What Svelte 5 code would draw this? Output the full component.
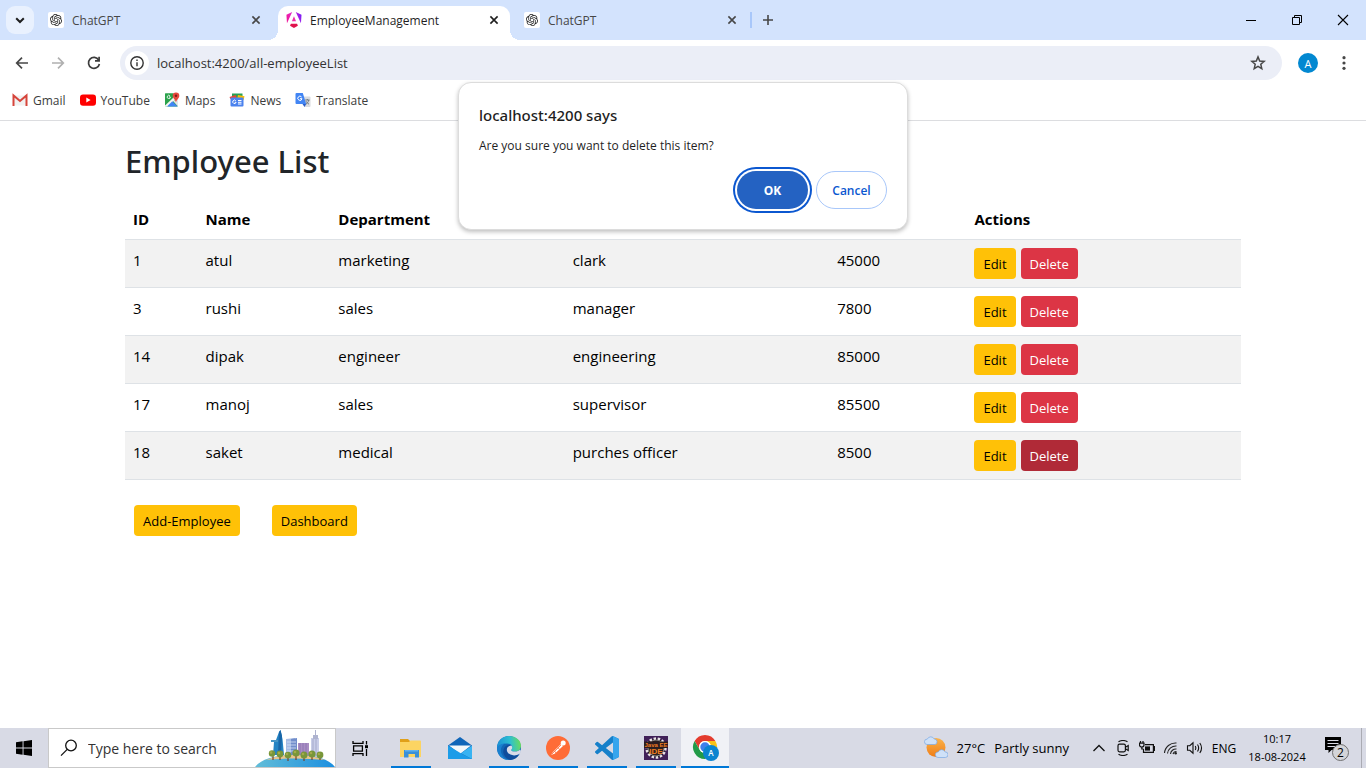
<script>
  let employees = $state([
    { id: 1, name: 'atul', department: 'marketing', role: 'clark', salary: 45000 },
    { id: 3, name: 'rushi', department: 'sales', role: 'manager', salary: 7800 },
    { id: 14, name: 'dipak', department: 'engineer', role: 'engineering', salary: 85000 },
    { id: 17, name: 'manoj', department: 'sales', role: 'supervisor', salary: 85500 },
    { id: 18, name: 'saket', department: 'medical', role: 'purches officer', salary: 8500 }
  ]);
  let pending = $state(18);
  let search = $state('');

  function confirmDelete() {
    employees = employees.filter((e) => e.id !== pending);
    pending = null;
  }
</script>

{#snippet closeIcon()}
  <svg width="16" height="16" viewBox="0 0 16 16" fill="none" stroke="currentColor" stroke-width="1.6"><path d="M4.400 4.400l7.200 7.200M11.600 4.400l-7.200 7.200" /></svg>
{/snippet}

{#snippet gptIcon()}
  <svg class="fav" width="16" height="16" viewBox="0 0 16 16">
    <rect width="16" height="16" rx="2" fill="#fff" />
    <g transform="translate(2 2) scale(.5)">
      <path fill="#222" d="M22.2819 9.8211a5.9847 5.9847 0 0 0-.5157-4.9108 6.0462 6.0462 0 0 0-6.5098-2.9A6.0651 6.0651 0 0 0 4.9807 4.1818a5.9847 5.9847 0 0 0-3.9977 2.9 6.0462 6.0462 0 0 0 .7427 7.0966 5.98 5.98 0 0 0 .511 4.9107 6.051 6.051 0 0 0 6.5146 2.9001A5.9847 5.9847 0 0 0 13.2599 24a6.0557 6.0557 0 0 0 5.7718-4.2058 5.9894 5.9894 0 0 0 3.9977-2.9001 6.0557 6.0557 0 0 0-.7475-7.0729zm-9.022 12.6081a4.4755 4.4755 0 0 1-2.8764-1.0408l.1419-.0804 4.7783-2.7582a.7948.7948 0 0 0 .3927-.6813v-6.7369l2.02 1.1686a.071.071 0 0 1 .038.052v5.5826a4.504 4.504 0 0 1-4.4945 4.4944zm-9.6607-4.1254a4.4708 4.4708 0 0 1-.5346-3.0137l.142.0852 4.783 2.7582a.7712.7712 0 0 0 .7806 0l5.8428-3.3685v2.3324a.0804.0804 0 0 1-.0332.0615L9.74 19.9502a4.4992 4.4992 0 0 1-6.1408-1.6464zM2.3408 7.8956a4.485 4.485 0 0 1 2.3655-1.9728V11.6a.7664.7664 0 0 0 .3879.6765l5.8144 3.3543-2.0201 1.1685a.0757.0757 0 0 1-.071 0l-4.8303-2.7865A4.504 4.504 0 0 1 2.3408 7.872zm16.5963 3.8558L13.1038 8.364 15.1192 7.2a.0757.0757 0 0 1 .071 0l4.8303 2.7913a4.4944 4.4944 0 0 1-.6765 8.1042v-5.6772a.79.79 0 0 0-.407-.667zm2.0107-3.0231l-.142-.0852-4.7735-2.7818a.7759.7759 0 0 0-.7854 0L9.409 9.2297V6.8974a.0662.0662 0 0 1 .0284-.0615l4.8303-2.7866a4.4992 4.4992 0 0 1 6.6802 4.66zM8.3065 12.863l-2.02-1.1638a.0804.0804 0 0 1-.038-.0567V6.0742a4.4992 4.4992 0 0 1 7.3757-3.4537l-.142.0805L8.704 5.459a.7948.7948 0 0 0-.3927.6813zm1.0976-2.3654l2.602-1.4998 2.6069 1.4998v2.9994l-2.5974 1.4997-2.6067-1.4997Z" />
    </g>
  </svg>
{/snippet}

<div class="screen">
  <header class="browser">
    <div class="tabstrip">
      <button class="tabsearch" aria-label="Search tabs">
        <svg width="16" height="16" viewBox="0 0 16 16" fill="none" stroke="#1f1f1f" stroke-width="2"><path d="M4.2 6.2L8 10l3.8-3.8" /></svg>
      </button>
      <div class="tab first">
        {@render gptIcon()}
        <span class="title">ChatGPT</span>
        <button class="close" aria-label="Close tab">{@render closeIcon()}</button>
      </div>
      <div class="tab active">
        <svg class="fav" width="16" height="16" viewBox="0 0 223 236">
          <defs><linearGradient id="ng" x1="0" y1="0.6" x2="1" y2="0.4"><stop offset="0" stop-color="#f0169a" /><stop offset="0.5" stop-color="#e32bd0" /><stop offset="1" stop-color="#7a1cf5" /></linearGradient></defs>
          <path fill="url(#ng)" d="m222.077 39.192-8.019 125.923L137.387 0l84.69 39.192ZM7.937 165.115 0 39.192 84.69 0 7.937 165.115Z" />
          <path fill="#e0134c" d="m168.972 202.017-57.933 33.056-57.934-33.056 11.783-28.556h92.301l11.783 28.556Z" />
          <path fill="#f02ea8" d="M111.039 62.675l30.357 73.803H80.681l30.358-73.803Z" />
        </svg>
        <span class="title">EmployeeManagement</span>
        <button class="close" aria-label="Close tab">{@render closeIcon()}</button>
      </div>
      <div class="tab last">
        {@render gptIcon()}
        <span class="title">ChatGPT</span>
        <button class="close" aria-label="Close tab">{@render closeIcon()}</button>
      </div>
      <span class="tabsep"></span>
      <button class="newtab" aria-label="New tab">
        <svg width="16" height="16" viewBox="0 0 16 16" stroke="#474747" stroke-width="1.6"><path d="M8 3v10M3 8h10" /></svg>
      </button>
      <div class="winbtns">
        <button aria-label="Minimize"><svg width="12" height="12" viewBox="0 0 12 12"><path d="M1 6h10v1H1z" /></svg></button>
        <button aria-label="Restore"><svg width="12" height="12" viewBox="0 0 12 12" fill="none" stroke="#000"><path d="M1.5 3.5h7v7h-7zM3.5 3.500v-2h7v7h-2" /></svg></button>
        <button aria-label="Close"><svg width="12" height="12" viewBox="0 0 12 12" fill="none" stroke="#000" stroke-width="1.1"><path d="M1 1l10 10M11 1L1 11" /></svg></button>
      </div>
    </div>

    <div class="toolbar">
      <button class="nav" aria-label="Back"><svg width="16" height="16" viewBox="0 0 16 16" fill="none" stroke="#474747" stroke-width="1.700"><path d="M14 8H3M8 2.700L2.700 8 8 13.300" /></svg></button>
      <button class="nav" aria-label="Forward" disabled><svg width="16" height="16" viewBox="0 0 16 16" fill="none" stroke="#b0b0b0" stroke-width="1.700"><path d="M2 8h11M8 2.700L13.300 8 8 13.300" /></svg></button>
      <button class="nav" aria-label="Reload"><svg width="16" height="16" viewBox="0 0 16 16" fill="none" stroke="#3c3c3c" stroke-width="1.700"><path d="M12.700 5A5.500 5.500 0 1 0 13.400 9" /><path d="M13.100 1.800v4.100H9" /></svg></button>
      <div class="omnibox">
        <button class="info" aria-label="View site information">
          <svg width="16" height="16" viewBox="0 0 16 16"><circle cx="8" cy="8" r="6.200" fill="none" stroke="#333" stroke-width="1.400" /><path d="M7.300 7.200h1.400v4H7.300zM7.300 4.600h1.400V6H7.300z" fill="#333" /></svg>
        </button>
        <input class="url" aria-label="Address" value="localhost:4200/all-employeeList" />
        <button class="star" aria-label="Bookmark this tab">
          <svg width="16" height="16" viewBox="0 0 16 16" fill="none" stroke="#474747" stroke-width="1.500"><path d="M8 1.900l1.700 4.100 4.500.4-3.400 2.900 1 4.300L8 11.300l-3.800 2.300 1-4.300L1.800 6.400l4.500-.4z" /></svg>
        </button>
      </div>
      <button class="profile" aria-label="Profile">A</button>
      <button class="kebab" aria-label="Menu"><svg width="16" height="16" viewBox="0 0 16 16" fill="#474747"><circle cx="8" cy="2.700" r="1.600" /><circle cx="8" cy="8" r="1.600" /><circle cx="8" cy="13.300" r="1.600" /></svg></button>
    </div>

    <nav class="bookmarks" aria-label="Bookmarks">
      <a href="#gmail">
        <svg width="16" height="16" viewBox="0 0 16 16"><path d="M2 3.500h12v10H2z" fill="#f1f1f1" /><path d="M1.500 14V3.500L8 9l6.500-5.500V14" fill="none" stroke="#d6453b" stroke-width="2" /></svg>
        <span>Gmail</span></a>
      <a href="#youtube">
        <svg width="16" height="16" viewBox="0 0 16 16"><rect y="2.500" width="16" height="11.200" rx="3" fill="#f00" /><path d="M6.300 5.600v5l4.300-2.500z" fill="#fff" /></svg>
        <span>YouTube</span></a>
      <a href="#maps">
        <svg width="16" height="16" viewBox="0 0 16 16"><rect x="1" y="1.500" width="13" height="13" rx="1" fill="#2ba24c" /><path d="M14 5v9.500L9.500 9.500z" fill="#e3e5e8" /><path d="M1 12.500L10.500 3l2.500 3L4 14.500H1z" fill="#f5f5f5" /><path d="M3 14.500l5.300-5.300 5.400 5.300z" fill="#4285f4" /><path d="M1 1.500h8L9 6l-8 7.500z" fill="#2ba24c" /><path d="M6.300 4.900H4.900M6.400 5a1.600 1.600 0 1 1-.5-1.200" fill="none" stroke="#fff" stroke-width=".9" /><path d="M12 10.500C11.500 7.500 8.700 6.500 8.700 3.700a3.300 3.300 0 0 1 6.600 0c0 2.800-2.800 3.800-3.300 6.800z" fill="#e5493d" /><circle cx="12" cy="3.700" r="1.200" fill="#811b13" /></svg>
        <span>Maps</span></a>
      <a href="#news">
        <svg width="16" height="16" viewBox="0 0 16 16"><path d="M3 1.500h10.500v5H3z" fill="#279f55" /><path d="M.5 5l6-2 2 4h-7z" fill="#ea4335" /><path d="M9 3l6.500 1.200L14.500 8H8z" fill="#fbbc04" /><rect x="1.500" y="5.500" width="13" height="9" rx="1" fill="#4b82ee" /><path d="M6.800 8.800a1.700 1.700 0 1 0 .3 1.500H5.700M9 8.500h3.500M9 10.300h3.500M9 12h3.500" fill="none" stroke="#fff" stroke-width="1" /></svg>
        <span>News</span></a>
      <a href="#translate">
        <svg width="16" height="16" viewBox="0 0 16 16"><path d="M6 4.500h8.500a1 1 0 0 1 1 1V14a1 1 0 0 1-1 1H9.500z" fill="#dadce0" /><path d="M1.500 1h6.300l3.400 11H1.500a1 1 0 0 1-1-1V2a1 1 0 0 1 1-1z" fill="#4285f4" /><path d="M7.500 12h3.700l-1.700 3z" fill="#2b5cc4" /><path d="M6.600 5a2.100 2.100 0 1 0 .4 1.700H5" fill="none" stroke="#fff" stroke-width="1" /><path d="M10.200 8h4.400M12.300 7v1M13.800 8c-.5 2-1.500 3.200-2.800 4.200M11 9.200c.6 1.300 1.700 2.300 3 3" fill="none" stroke="#687078" stroke-width=".9" /></svg>
        <span>Translate</span></a>
    </nav>
  </header>

  <main class="page">
    <div class="container">
      <h2>Employee List</h2>
      <table>
        <thead>
          <tr>
            <th class="c-id">ID</th>
            <th class="c-name">Name</th>
            <th class="c-dept">Department</th>
            <th class="c-role">Role</th>
            <th class="c-salary">Salary</th>
            <th>Actions</th>
          </tr>
        </thead>
        <tbody>
          {#each employees as e (e.id)}
            <tr>
              <td>{e.id}</td>
              <td>{e.name}</td>
              <td>{e.department}</td>
              <td>{e.role}</td>
              <td>{e.salary}</td>
              <td>
                <div class="actions">
                  <button class="btn warning">Edit</button>
                  <button class="btn danger" class:pressed={pending === e.id} onclick={() => (pending = e.id)}>Delete</button>
                </div>
              </td>
            </tr>
          {/each}
        </tbody>
      </table>
      <div class="links">
        <button class="btn warning">Add-Employee</button>
        <button class="btn warning">Dashboard</button>
      </div>
    </div>
  </main>

  {#if pending !== null}
    <div class="dialog" role="alertdialog" aria-labelledby="dlg-title" aria-describedby="dlg-text">
      <h1 id="dlg-title">localhost:4200 says</h1>
      <p id="dlg-text">Are you sure you want to delete this item?</p>
      <div class="choices">
        <button class="ok" onclick={confirmDelete}>OK</button>
        <button class="cancel" onclick={() => (pending = null)}>Cancel</button>
      </div>
    </div>
  {/if}

  <footer class="taskbar">
    <button class="start" aria-label="Start">
      <svg width="16" height="16" viewBox="0 0 16 16"><path d="M0 2.300L6.600 1.300v6.200H0zM7.500 1.200L16 0v7.500H7.500zM0 8.400h6.600v6.300L0 13.800zM7.500 8.400H16V16l-8.500-1.200z" /></svg>
    </button>
    <label class="searchbox">
      <svg class="glass" width="18" height="18" viewBox="0 0 18 18" fill="none" stroke="#111" stroke-width="1.300"><circle cx="11" cy="6.500" r="5.300" /><path d="M7.200 10.400L1 16.600" /></svg>
      <input aria-label="Search" placeholder="Type here to search" bind:value={search} />
      <svg class="city" width="80" height="38" viewBox="0 0 80 38">
        <defs><linearGradient id="hill"><stop offset="0" stop-color="#62bdd8" /><stop offset="1" stop-color="#1c8fe0" /></linearGradient></defs>
        <path d="M18 26l1-13 2-2 3-8 1.500-2 2 9L29 26z" fill="#2584c4" /><path d="M24 3l1.500-2 1.500 6-1 19h-3z" fill="#1866a8" /><path d="M16 11h7v2h-7z" fill="#4795c5" />
        <path d="M31 10l9-1v20h-9z" fill="#a7bce4" /><path d="M36 10l6-1v20h-6z" fill="#728ecb" /><path d="M32 13h9M32 16h9M32 19h9M32 22h9" stroke="#d7e2f6" stroke-width=".8" />
        <path d="M43 14h11v14H43z" fill="#a98dc3" /><path d="M45 14v12M48 14v12M51 14v12" stroke="#8c76b4" />
        <path d="M56 9h8v19h-8z" fill="#c8cde8" /><path d="M58 6h5v4h-5zM60 1h1v5h-1z" fill="#aeb3cf" /><path d="M58 10v17M61 10v17" stroke="#a5aacb" />
        <path d="M0 38C7 29 22 26 40 26s33 3 40 12z" fill="url(#hill)" /><path d="M11 31C20 27 30 26 40 26s20 1 30 5c-20-2-40-2-59 0z" fill="#e8c58b" />
        <g stroke="#76442a" stroke-width="1.200"><path d="M18 25v6M25 25v6M33 25v7M41 24v7M49 25v7M57 25v6M65 26v5" /></g>
        <g fill="#78963a"><circle cx="17" cy="24.500" r="3.200" /><circle cx="25" cy="25" r="3.400" /><circle cx="33" cy="26" r="3.300" /><circle cx="41" cy="24" r="3.600" /><circle cx="49" cy="26" r="3.500" /><circle cx="57" cy="25" r="3.600" /><circle cx="65" cy="26" r="3.400" /></g>
        <g fill="#a4aa48"><circle cx="16" cy="23.500" r="1.300" /><circle cx="24" cy="24" r="1.300" /><circle cx="32" cy="25" r="1.300" /><circle cx="40" cy="23" r="1.300" /><circle cx="48" cy="25" r="1.300" /><circle cx="56" cy="24" r="1.300" /><circle cx="64" cy="25" r="1.300" /></g>
      </svg>
    </label>
    <button class="start" aria-label="Task View">
      <svg width="17" height="17" viewBox="0 0 17 17" fill="none" stroke="#000" stroke-width="1.300"><path d="M1 1v2.300h10V1M1 16v-2.300h10V16M1.600 5.800h8.800v5.400H1.600zM14.500 1v3.500M14.500 9v7" /><path d="M13 5.200h3v3h-3z" fill="#000" stroke="none" /></svg>
    </button>
    <div class="apps">
      <button class="app running" aria-label="File Explorer">
        <svg width="24" height="24" viewBox="0 0 24 24"><path d="M1 3h8l2 2h10v6H1z" fill="#e0a019" /><path d="M1 6h9l1.500-1.500H21a1 1 0 0 1 1 1V21H1z" fill="#fcd462" /><path d="M5 14h15v7.500h-4V18h-6.500v3.500H5z" fill="#3a8fd8" /><path d="M6 14h13v1.500H6z" fill="#5fb0ee" /></svg>
      </button>
      <button class="app" aria-label="Mail">
        <svg width="24" height="24" viewBox="0 0 24 24"><path d="M0 9.500L12 1l12 8.500V23H0z" fill="#1066b9" /><path d="M1 9.500h22L12 18z" fill="#f3f7fa" /><path d="M0 9.500L14 18l10 5H0z" fill="#1c9ce8" /><path d="M24 9.500V23L13 17.200z" fill="#38b3f2" /></svg>
      </button>
      <button class="app running" aria-label="Microsoft Edge">
        <svg width="24" height="24" viewBox="0 0 24 24"><defs><linearGradient id="e1" x1="0" y1=".5" x2="1" y2=".4"><stop stop-color="#1a8fd5" /><stop offset=".55" stop-color="#2dbfd2" /><stop offset="1" stop-color="#6bdc58" /></linearGradient></defs><circle cx="12" cy="12" r="12" fill="#1266b5" /><path d="M0 12C0 5 5 0 12 0c7 0 12 4.500 12 9.500 0 4-2.700 6-6 6-2.800 0-4.500-.8-3.500-2 1.800-2.500.4-6-4.500-6-4 0-8 1.500-10 4.500z" fill="url(#e1)" /><path d="M0 12c1.500-3 5-4.700 8-4.500-3.500 2-5 6-3.500 10 1.300 3.500 4.500 6 7.500 6.500C5 24 0 19 0 12z" fill="#1a80cf" /><path d="M14.500 10.500c-3.700-.5-5.300 2-4.500 4.500 1.300 4.500 7.500 5.700 12.500 3-2 3.500-5 5.500-9 6-5-1-9.500-7-6-12.500 1.500-2.500 5.500-3.500 7-1z" fill="#0f4d9c" /><path d="M14.300 9.500c1.200 1.200 1.300 2.700.2 4-1 1.200.7 2 3.500 2 2 0 3.800-.6 5-2 1.500 1.500 1 3-.5 4.500-5 2.700-11.200 1.300-12.500-3-.7-2.500.8-5.200 4.300-5.500z" fill="#d9dce8" /></svg>
      </button>
      <button class="app running" aria-label="Postman">
        <svg width="24" height="24" viewBox="0 0 24 24"><circle cx="12" cy="12" r="12" fill="#ff6c37" /><path d="M5 19l2-3 8-8 2 2-8 7.500z" fill="#fff" /><path d="M5.500 18.500l10-10M8.500 15l1.500 2M12 11.500l1.500 2" stroke="#ff6c37" stroke-width=".8" /><circle cx="17.200" cy="7" r="2.500" fill="#fff" /></svg>
      </button>
      <button class="app running" aria-label="Visual Studio Code">
        <svg width="24" height="24" viewBox="0 0 24 24"><path fill="#1680ca" d="M23.15 2.587L18.21.21a1.494 1.494 0 0 0-1.705.29l-9.46 8.63-4.12-3.128a.999.999 0 0 0-1.276.057L.327 7.261A1 1 0 0 0 .326 8.74L3.899 12 .326 15.26a1 1 0 0 0 .001 1.479L1.65 17.94a.999.999 0 0 0 1.276.057l4.12-3.128 9.46 8.63a1.492 1.492 0 0 0 1.704.29l4.942-2.377A1.5 1.5 0 0 0 24 20.06V3.939a1.500 1.500 0 0 0-.85-1.352zm-5.146 14.861L10.826 12l7.178-5.448v10.896z" /><path d="M18 0l5.500 2.700q.5.500.5 1.300v16q0 .8-.5 1.300L18 24z" fill="#35a5ed" /></svg>
      </button>
      <button class="app running" aria-label="Java EE IDE">
        <svg width="24" height="24" viewBox="0 0 24 24"><rect width="24" height="24" fill="#402058" /><circle cx="12" cy="12" r="9.500" fill="#241b26" stroke="#e9e4e6" stroke-width="2.400" stroke-dasharray="2.500 1.700" /><circle cx="12" cy="12" r="8" fill="#2b211f" stroke="#b5aeb0" stroke-width=".7" /><path d="M0 5.500h24V12H0z" fill="#2b1c20" /><g fill="#f07d22" font-family="Liberation Sans, sans-serif" font-weight="700" text-anchor="middle"><text x="12" y="11" font-size="6">Java EE</text><text x="12" y="18" font-size="8">IDE</text></g></svg>
      </button>
      <button class="app current" aria-label="Google Chrome">
        <svg width="28" height="28" viewBox="0 0 28 28"><circle cx="14" cy="14" r="12" fill="#fff" /><path d="M3.600 8A12 12 0 0 1 24.400 8H14a6 6 0 0 0-5.200 9z" fill="#e33b2e" /><path d="M24.400 8A12 12 0 0 1 14 26l5.200-9A6 6 0 0 0 14 8z" fill="#fbc116" /><path d="M14 26A12 12 0 0 1 3.600 8l5.200 9a6 6 0 0 0 8.200 2.200z" fill="#229a48" /><circle cx="14" cy="14" r="6" fill="#fff" /><circle cx="14" cy="14" r="4.700" fill="#3f80ec" /><circle cx="20" cy="20" r="8" fill="#0b84d0" /><text x="20" y="23" font-size="8" font-family="Open Sans, sans-serif" font-weight="600" text-anchor="middle" fill="#fff">A</text></svg>
      </button>
    </div>

    <button class="weather">
      <svg width="24" height="24" viewBox="0 0 24 24"><defs><linearGradient id="sun" x2="0" y2="1"><stop stop-color="#fbb34a" /><stop offset="1" stop-color="#ef7d17" /></linearGradient></defs><circle cx="12" cy="11.500" r="9.500" fill="url(#sun)" /><path d="M3 8.500a2.700 2.700 0 0 1 .3-5.400A3.800 3.800 0 0 1 10.200 3a2.800 2.800 0 0 1 .8 5.500z" fill="#cfe1f8" stroke="#7aa9e4" stroke-width=".7" /><path d="M14 21.500a2.800 2.800 0 0 1 .3-5.600 3.700 3.700 0 0 1 6.800 0 2.800 2.800 0 0 1 .2 5.600z" fill="#cfe1f8" stroke="#7aa9e4" stroke-width=".7" /></svg>
      <span>27°C</span><span>Partly sunny</span>
    </button>
    <div class="tray">
      <button aria-label="Show hidden icons"><svg width="16" height="16" viewBox="0 0 16 16" fill="none" stroke="#111" stroke-width="1.300"><path d="M2.500 11L8 5.500l5.500 5.500" /></svg></button>
      <button aria-label="Meet Now"><svg width="16" height="16" viewBox="0 0 16 16" fill="none" stroke="#111" stroke-width="1.200"><rect x="3" y="4.200" width="7.400" height="7.600" rx="1.500" /><path d="M10.400 7.200l2.800-1.700v5l-2.800-1.700M3.500 1.800Q8-.8 12.500 1.800M3.500 14.200q4.500 2.600 9 0" /></svg></button>
      <button aria-label="Battery"><svg width="16" height="16" viewBox="0 0 16 16" fill="none" stroke="#111" stroke-width="1.200"><path d="M6 4.600h8.400v7.800H4.500V9M14.400 6.500h1.200v4h-1.200M1.500 1v2M4 1v2M.5 3.200H5v1.800Q5 7 2.800 7T.5 5zM2.800 7v2h1.700" /><path d="M6 6.400h5v4.200H6z" fill="#111" stroke="none" /></svg></button>
      <button aria-label="Network"><svg width="16" height="16" viewBox="0 0 16 16" fill="none" stroke="#222" stroke-width="1.100"><path d="M1.500 13A11 11 0 0 1 13.500 3M4.500 13.500A8.500 8.500 0 0 1 13.500 6M7.500 14a5.500 5.500 0 0 1 6-5M10 14a3.500 3.500 0 0 1 3.500-2.500" /><circle cx="12.700" cy="13.300" r="1.200" fill="#222" stroke="none" /></svg></button>
      <button aria-label="Volume"><svg width="18" height="16" viewBox="0 0 18 16" fill="none" stroke="#111" stroke-width="1.100"><path d="M1.500 5.700h2.300L7 2.800v10.400l-3.200-2.900H1.500zM9.300 6q1.200 2 0 4M11.500 4.500q2.300 3.500 0 7M13.800 3q3.500 5 0 10" /></svg></button>
      <button class="lang">ENG</button>
      <button class="clock"><span>10:17</span><span>18-08-2024</span></button>
      <button class="notes" aria-label="2 new notifications">
        <svg width="24" height="28" viewBox="0 0 24 28"><path d="M0 3h16v13H6.500L3.500 19v-3H0z" fill="#000" /><path d="M2.500 6.500h11M2.500 9.500h11M2.500 12.500h8" stroke="#d9dae4" /><circle cx="15.500" cy="18.500" r="8" fill="#d3d4d8" stroke="#707070" /><text x="15.500" y="22.500" font-size="12" font-family="Open Sans, sans-serif" text-anchor="middle">2</text></svg>
      </button>
      <span class="peek"></span>
    </div>
  </footer>
</div>

<style>
  :global(body) { margin: 0; background: #fff; }
  .screen {
    position: relative;
    display: flex;
    flex-direction: column;
    min-height: 100vh;
    font-family: 'Open Sans', 'Noto Sans', sans-serif;
    color: #000;
  }
  .screen * { box-sizing: border-box; }
  button {
    display: flex;
    align-items: center;
    justify-content: center;
    border: 0;
    padding: 0;
    background: none;
    font: inherit;
    color: inherit;
    white-space: nowrap;
  }
  input { border: 0; padding: 0; background: none; font: inherit; outline: 0; min-width: 0; }
  svg { display: block; flex: none; }

  .browser { border-bottom: 1px solid #dcdde0; }
  .tabstrip { display: flex; align-items: center; height: 40px; background: #d3e3fd; }
  .tabsearch { width: 28px; height: 28px; margin: 0 6px; border-radius: 9px; background: #e9f1fe; flex: none; }
  .tab {
    display: flex;
    align-items: center;
    gap: 8px;
    flex: 0 1 232px;
    height: 34px;
    margin-top: 6px;
    padding: 0 8px 6px;
    font-size: 12px;
    color: #474747;
  }
  .tab.first { flex-basis: 238px; padding-right: 14px; }
  .tab.last { padding: 0 2px 6px 14px; }
  .tab .title { flex: 1; overflow: hidden; }
  .tab.active { position: relative; background: #fff; border-radius: 10px 10px 0 0; color: #1f1f1f; }
  .tab.active::before,
  .tab.active::after { content: ''; position: absolute; bottom: 0; width: 10px; height: 10px; }
  .tab.active::before { left: -10px; background: radial-gradient(circle at 0 0, transparent 10px, #fff 10px); }
  .tab.active::after { right: -10px; background: radial-gradient(circle at 100% 0, transparent 10px, #fff 10px); }
  .close { width: 16px; height: 16px; }
  .tabsep { width: 2px; height: 16px; margin-left: 8px; background: #a8c7fa; }
  .newtab { width: 32px; height: 28px; }
  .winbtns { display: flex; margin-left: auto; }
  .winbtns button { width: 46px; height: 40px; }

  .toolbar {
    display: flex;
    align-items: center;
    height: 46px;
    padding: 0 6px 0 4px;
    background: #fff;
  }
  .nav { width: 36px; height: 34px; }
  .omnibox {
    display: flex;
    align-items: center;
    flex: 1;
    height: 34px;
    margin: 0 11px 0 8px;
    padding: 0 12px 0 5px;
    border-radius: 17px;
    background: #ebeef7;
  }
  .info { width: 24px; height: 24px; border-radius: 50%; background: #fff; }
  .url { flex: 1; margin-left: 8px; font-size: 13px; color: #333; }
  .star { width: 24px; height: 24px; }
  .profile {
    width: 20px;
    height: 20px;
    margin: 0 10px 0 5px;
    border-radius: 50%;
    background: #0288d1;
    color: #fff;
    font-size: 11px;
  }
  .kebab { width: 32px; height: 32px; }

  .bookmarks { display: flex; gap: 14px; height: 34px; padding: 0 12px 6px; align-items: center; font-size: 12px; }
  .bookmarks a { display: flex; align-items: center; gap: 5px; color: #3c3c3c; text-decoration: none; }

  .page { flex: 1; }
  .container { max-width: 1140px; margin: 0 auto; padding: 21px 12px; }
  h2 { margin: 0 0 20px; font-family: 'Noto Sans', 'Open Sans', sans-serif; font-size: 31px; font-weight: 500; line-height: 38px; color: #212529; }
  table { width: 100%; border-collapse: collapse; table-layout: fixed; font-size: 15px; line-height: 24px; }
  th, td { padding: 8px; border-bottom: 1px solid #dee2e6; text-align: left; vertical-align: top; }
  th { padding: 7px 8px 8px; font-weight: 700; }
  td { height: 48px; padding: 8px 8px 7px; }
  tbody tr:nth-child(odd) { background: #f2f2f2; }
  .c-id { width: 6.5%; }
  .c-name { width: 11.9%; }
  .c-dept { width: 21%; }
  .c-role { width: 23.7%; }
  .c-salary { width: 12.3%; }
  .actions { display: flex; gap: 5px; }
  .btn { height: 31px; padding: 1px 9px 0; border-radius: 4px; font-size: 13px; line-height: 21px; }
  .warning { background: #ffc107; color: #000; }
  .danger { background: #dc3545; color: #fff; }
  .danger.pressed { background: #b02a37; }
  .links { display: flex; gap: 32px; padding: 25px 9px; }

  .dialog {
    position: absolute;
    top: 82px;
    left: 50%;
    width: 450px;
    transform: translateX(-50%);
    padding: 20px;
    border: 1px solid #dcdcdc;
    border-radius: 13px;
    background: #fff;
    box-shadow: 0 2px 4px rgba(0, 0, 0, 0.25);
  }
  .dialog h1 { margin: 0; font-family: 'Noto Sans', 'Open Sans', sans-serif; font-size: 15px; font-weight: 500; line-height: 24px; color: #1f1f1f; }
  .dialog p { margin: 10px 0 16px; font-size: 12px; line-height: 18px; color: #1f1f1f; }
  .choices { display: flex; justify-content: flex-end; gap: 8px; font-size: 12px; font-weight: 600; }
  .choices button { width: 71px; height: 38px; border-radius: 19px; }
  .choices .ok { background: #2462c2; color: #fff; box-shadow: 0 0 0 2px #fff, 0 0 0 4px #0b57d0; font-weight: 700; }
  .choices .cancel { border: 1px solid #a8c7fa; color: #0b57d0; }

  .taskbar { display: flex; align-items: stretch; height: 40px; background: #d8dae5; font-size: 14px; }
  .start { width: 48px; }
  .searchbox {
    display: flex;
    align-items: center;
    flex: 0 1 288px;
    min-width: 0;
    height: 40px;
    padding: 0 0 0 11px;
    border: 1px solid #c9c9c9;
    background: #fff;
  }
  .searchbox input { flex: 1; width: 0; margin-left: 10px; font-size: 14px; }
  .searchbox input::placeholder { color: #333; opacity: 1; }
  .apps { display: flex; gap: 1px; margin-left: 3px; }
  .app { width: 48px; }
  .running { background: linear-gradient(#0078d7, #0078d7) bottom / 40px 2px no-repeat; }
  .current { background: #f0f1f6; border-bottom: 2px solid #0078d7; }
  .weather { gap: 9px; margin-left: auto; padding-right: 18px; font-size: 13px; }
  .tray { display: flex; font-size: 12px; }
  .tray button { width: 24px; }
  .tray .lang { width: 34px; }
  .tray .clock { flex-direction: column; width: 72px; font-size: 11px; line-height: 18px; }
  .tray .notes { width: 48px; }
  .peek { width: 5px; border-left: 1px solid #aaabb3; }
</style>
